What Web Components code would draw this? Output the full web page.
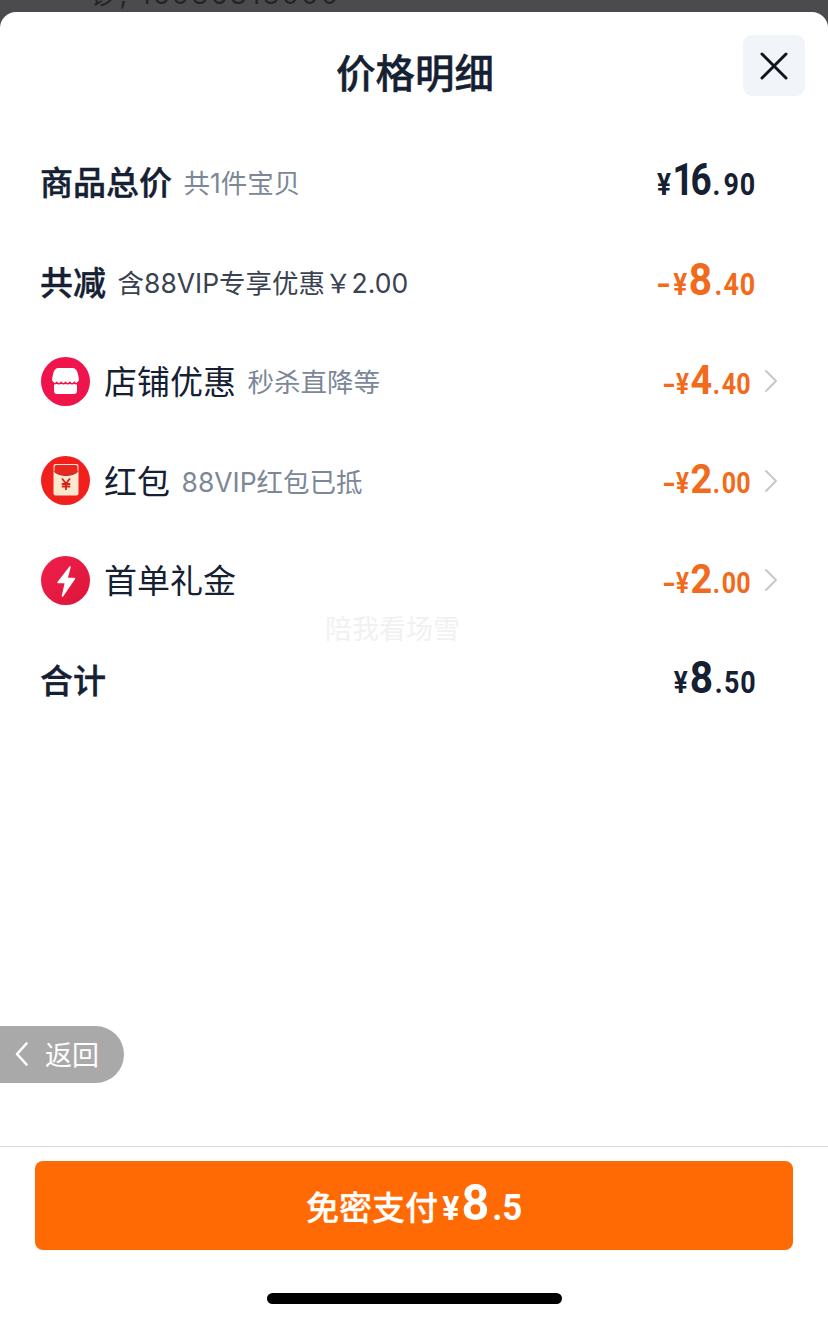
<!DOCTYPE html>
<html lang="zh"><head><meta charset="utf-8"><title>价格明细</title>
<style>
html,body{margin:0;padding:0;background:#fff}
body{font-family:"Noto Sans CJK SC","Noto Sans",sans-serif;color:#152033;width:828px;height:1321px;overflow:hidden}
</style></head><body>
<price-sheet>
  <price-row label="商品总价" note="共1件宝贝" strong slot="row"><price-amount yen="¥" int="16" dec=".90"></price-amount></price-row>
  <price-row label="共减" note="含88VIP专享优惠￥2.00" strong dark-note slot="row"><price-amount orange minus yen="¥" int="8" dec=".40"></price-amount></price-row>
  <price-row label="店铺优惠" note="秒杀直降等" chevron slot="row"><row-icon kind="store" slot="icon"></row-icon><price-amount orange minus small yen="¥" int="4" dec=".40"></price-amount></price-row>
  <price-row label="红包" note="88VIP红包已抵" chevron slot="row"><row-icon kind="packet" slot="icon"></row-icon><price-amount orange minus small yen="¥" int="2" dec=".00"></price-amount></price-row>
  <price-row label="首单礼金" chevron slot="row"><row-icon kind="bolt" slot="icon"></row-icon><price-amount orange minus small yen="¥" int="2" dec=".00"></price-amount></price-row>
  <price-row label="合计" strong slot="row"><price-amount yen="¥" int="8" dec=".50"></price-amount></price-row>
</price-sheet>
<script>
const NUM='"Roboto","Liberation Sans",sans-serif';
const CJK='"Inter","Noto Sans CJK SC",sans-serif';
class PriceSheet extends HTMLElement{constructor(){super();this.attachShadow({mode:'open'}).innerHTML=`
<style>
:host{display:flex;flex-direction:column;position:relative;width:828px;height:1321px;background:#4b4b4d;overflow:hidden}
.peek{height:12px;flex:none;overflow:hidden;font:27px/30px ${CJK};color:#242426;letter-spacing:2.5px}
.peek span{display:block;margin:-20px 0 0 90px}
.sheet{flex:1;display:flex;flex-direction:column;background:#fff;border-radius:16px 16px 0 0;min-height:0;position:relative}
header{height:121px;flex:none;position:relative;display:flex;justify-content:center;padding:34px 0 0 2px;box-sizing:border-box}
h1{margin:0;font:500 39.500px/50px "Noto Sans CJK SC",sans-serif;color:#152033;-webkit-text-stroke:.4px #152033}
.close{position:absolute;left:743px;top:23px;width:62px;height:61px;border-radius:9px;background:#f1f4f8;display:flex;align-items:center;justify-content:center}
.rows{display:flex;flex-direction:column;flex:none}
.spacer{flex:1}
.wm{position:absolute;left:325px;top:599px;font:27px/34px "Noto Sans CJK SC",sans-serif;color:#f1f1f1;white-space:nowrap}
.back{position:absolute;left:0;top:1014px;width:124px;height:57px;border-radius:0 29px 29px 0;background:#a9a9a9;color:#fff;display:flex;align-items:center;font:27px/34px "Noto Sans CJK SC",sans-serif;box-sizing:border-box;padding:0 0 1px 14px;gap:15px}
footer{flex:none;border-top:1px solid #d8d8d8;height:175px;box-sizing:border-box;display:flex;flex-direction:column;align-items:center;padding-top:14px}
.pay{width:758px;height:89px;background:#ff6a04;border-radius:8px;color:#fff;display:flex;align-items:baseline;justify-content:center;line-height:85px}
.pay .t{font:500 33px/85px "Noto Sans CJK SC",sans-serif;-webkit-text-stroke:.3px #fff}
.pay .n{display:inline-flex;align-items:baseline;transform:scaleX(.97);transform-origin:left center;width:84px}
.pay .y{font:700 33px/85px ${NUM};margin-left:4.500px}
.pay .i{font:700 50px/85px ${NUM};margin-left:2px}
.pay .d{font:700 36px/85px ${NUM};margin-left:3px}
.home{width:295px;height:11px;border-radius:6px;background:#000;margin-top:43px}
</style>
<div class="peek"><span>钞, 15986813000</span></div>
<div class="sheet">
<header><h1>价格明细</h1><div class="close"><svg width="30" height="30" viewBox="0 0 30 30"><path d="M3 3 27 27M27 3 3 27" stroke="#10141c" stroke-width="3" stroke-linecap="round" fill="none"/></svg></div></header>
<div class="rows"><slot name="row"></slot></div>
<div class="spacer"></div>
<div class="wm">陪我看场雪</div>
<div class="back"><svg width="16" height="26" viewBox="0 0 16 26"><path d="M12.500 2.500 3 13l9.500 10.500" stroke="#fff" stroke-width="2.600" fill="none" stroke-linecap="round" stroke-linejoin="round"/></svg><span>返回</span></div>
<footer><div class="pay"><span class="t">免密支付</span><span class="n"><span class="y">¥</span><span class="i">8</span><span class="d">.5</span></span></div><div class="home"></div></footer>
</div>`}}
customElements.define('price-sheet',PriceSheet);

class PriceRow extends HTMLElement{constructor(){super();this.attachShadow({mode:'open'})}
connectedCallback(){const strong=this.hasAttribute('strong'),dark=this.hasAttribute('dark-note'),chev=this.hasAttribute('chevron'),note=this.getAttribute('note');
this.shadowRoot.innerHTML=`<style>
:host{display:flex;align-items:center;height:99.5px;padding:0 ${chev?'50px':'72px'} 0 40px;font-family:${CJK}}
.icon{display:flex}.icon.on{margin-right:14.500px}
.l{font-size:33px;line-height:40px;font-weight:${strong?500:400};color:#152033;white-space:nowrap;margin-top:1px;${strong?'-webkit-text-stroke:.4px #152033':''}}
.n{font-size:26.500px;line-height:40px;margin:1px 0 0 11.500px;color:${dark?'#3a4252':'#7c8798'};white-space:nowrap}
.amt{margin-left:auto;display:flex;align-items:center}
.c{margin-left:13px;display:flex;margin-bottom:1px}
</style>
<span class="icon ${chev?'on':''}"><slot name="icon"></slot></span><span class="l">${this.getAttribute('label')}</span>${note?`<span class="n">${note}</span>`:''}
<span class="amt"><slot></slot></span>${chev?`<span class="c"><svg width="14" height="24" viewBox="0 0 14 24"><path d="M2 2l10 10L2 22" stroke="#c8c8c8" stroke-width="2" fill="none" stroke-linecap="round" stroke-linejoin="round"/></svg></span>`:''}`}}
customElements.define('price-row',PriceRow);

class PriceAmount extends HTMLElement{constructor(){super();this.attachShadow({mode:'open'})}
connectedCallback(){const c=this.hasAttribute('orange')?'#f26a1b':'#152033',small=this.hasAttribute('small'),s=small?.93:1,v=this.getAttribute('int'),multi=v.length>1;
const px=n=>(n*s).toFixed(1)+'px';
this.shadowRoot.innerHTML=`<style>
:host{display:inline-flex;align-items:baseline;color:${c};font:700 ${px(29)}/44px ${NUM};white-space:nowrap;transform:scaleX(.84);transform-origin:right center}
.h{display:inline-block;transform:scaleX(1.5);transform-origin:left center;margin-right:${small?px(6):'8.400px'};font-size:${px(31)}}
.y{font-size:${px(31)}}
.i{display:inline-block;font-size:${px(44)};margin:0 ${px(2)};font-weight:700;letter-spacing:${multi?'-4px':'0'};transform:scaleX(${multi?1:1.1});transform-origin:left center}
.p{font-size:${px(32)};margin:0 ${small?'2px':(multi?'4px':'1.600px')} 0 ${small?'1px':'3px'}}
.d{font-size:${px(32)};letter-spacing:${small?'0':'1px'}}
</style>${this.hasAttribute('minus')?'<span class="h">-</span>':''}<span class="y">${this.getAttribute('yen')}</span><span class="i">${v}</span><span class="p">.</span><span class="d">${this.getAttribute('dec').slice(1)}</span>`}}
customElements.define('price-amount',PriceAmount);

class RowIcon extends HTMLElement{constructor(){super();this.attachShadow({mode:'open'})}
connectedCallback(){const k=this.getAttribute('kind');const art={
store:`<circle cx="24.500" cy="24.500" r="24.500" fill="#f0144c"/><path d="M17.500 11h14c2.500 0 4 1.500 5 4.500l1.300 5.500c.4 2-.3 3.500-1.800 4.500v8.500c0 1.700-1.300 3-3 3H16c-1.700 0-3-1.300-3-3v-8.500c-1.500-1-2.200-2.500-1.800-4.500l1.300-5.500c1-3 2.500-4.500 5-4.500z" fill="#fff"/><path d="M11 25.500c1.500 1.800 3.300 1.800 4.700 0 1.500 1.800 3.200 1.800 4.500 0 1.400 1.800 3.100 1.800 4.300 0 1.300 1.800 3 1.800 4.400 0 1.300 1.800 3 1.800 4.500 0 1.300 1.800 3 1.800 4.600 0" stroke="#f0144c" stroke-width="1.500" fill="none"/>`,
packet:`<circle cx="24.500" cy="24.500" r="24.500" fill="#f1201c"/><rect x="12.500" y="8" width="25" height="31.500" rx="2" fill="#fbe8cf"/><path d="M13.500 11a2 2 0 0 1 2-2h19a2 2 0 0 1 2 2v4.500c-3 2.800-7.500 3.800-11.500 3.800s-8.500-1-11.500-3.800z" fill="#ea2620"/><path d="M12.500 15c3 3.200 8 4.500 12.500 4.500S34.500 18.200 37.500 15" stroke="#a31612" stroke-width=".9" fill="none"/><path d="M21 22.500l4 5 4-5M20.800 28h8.400M20.800 30.500h8.400M25 27.500v6.500" stroke="#d5211a" stroke-width="1.800" fill="none"/>`,
bolt:`<defs><linearGradient id="g" x1="0" y1="0" x2="1" y2="1"><stop offset="0" stop-color="#f0204c"/><stop offset="1" stop-color="#dc1438"/></linearGradient></defs><circle cx="24.500" cy="24.500" r="24.500" fill="url(#g)"/><path d="M29 11 17 26.500h7.500L21.500 40 33.500 22.500h-7.500z" fill="#fff" stroke="#fff" stroke-width="1.500" stroke-linejoin="round"/>`}[k];
this.shadowRoot.innerHTML=`<style>:host{display:block;width:49px;height:49px;margin:-1px 0 0 .5px}svg{display:block}</style><svg width="49" height="49" viewBox="0 0 49 49">${art}</svg>`}}
customElements.define('row-icon',RowIcon);
</script>
</body></html>
